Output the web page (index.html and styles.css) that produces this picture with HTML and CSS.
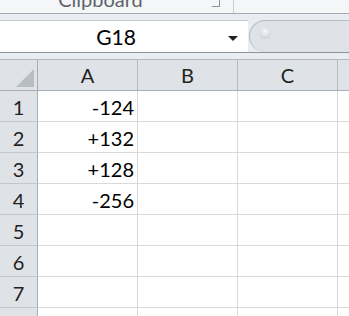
FILE: index.html
```html
<!DOCTYPE html>
<html lang="en">

<head>
    <meta charset="UTF-8">
    <title>Sheet</title>
    <link rel="stylesheet" href="styles.css">
</head>

<body>

    <div class="ribbon">
        <div class="group">
            <span class="group-label">Clipboard</span>
            <span class="launcher"></span>
        </div>
        <div class="group-rest"></div>
    </div>

    <div class="formula-row">
        <div class="name-box">
            <span class="name">G18</span>
            <span class="arrow"></span>
        </div>
        <div class="formula-bar">
            <span class="knob"></span>
        </div>
    </div>

    <div class="sheet">
        <div class="corner"><span class="tri"></span></div>
        <div class="col-head">A</div>
        <div class="col-head">B</div>
        <div class="col-head">C</div>
        <div class="col-head last"></div>

        <div class="row-head">1</div><div class="cell num">-124</div><div class="cell"></div><div class="cell"></div><div class="cell last"></div>
        <div class="row-head">2</div><div class="cell num">+132</div><div class="cell"></div><div class="cell"></div><div class="cell last"></div>
        <div class="row-head">3</div><div class="cell num">+128</div><div class="cell"></div><div class="cell"></div><div class="cell last"></div>
        <div class="row-head">4</div><div class="cell num">-256</div><div class="cell"></div><div class="cell"></div><div class="cell last"></div>
        <div class="row-head">5</div><div class="cell"></div><div class="cell"></div><div class="cell"></div><div class="cell last"></div>
        <div class="row-head">6</div><div class="cell"></div><div class="cell"></div><div class="cell"></div><div class="cell last"></div>
        <div class="row-head">7</div><div class="cell"></div><div class="cell"></div><div class="cell"></div><div class="cell last"></div>
        <div class="row-head">8</div><div class="cell"></div><div class="cell"></div><div class="cell"></div><div class="cell last"></div>
    </div>

</body>

</html>
```

FILE: styles.css
```css
body {
    margin: 0;
    width: 349px;
    height: 316px;
    overflow: hidden;
    font-family: Lato, "Liberation Sans", sans-serif;
    background-color: #e9ecf0;
}

.ribbon {
    display: flex;
    height: 13px;
    overflow: hidden;
    background-color: #f5f6f8;
    border-bottom: 1px solid #a5abb3;
}

.group {
    position: relative;
    width: 233px;
    border-right: 1px solid #c9ced5;
    text-align: center;
}

.group-label {
    display: block;
    margin-top: -12px;
    margin-left: -32px;
    font-size: 20px;
    line-height: 22px;
    color: #5f636a;
}

.launcher {
    position: absolute;
    left: 212px;
    top: 0;
    width: 7px;
    height: 6px;
    border-right: 1px solid #8d939b;
    border-bottom: 1px solid #8d939b;
}

.group-rest {
    flex: 1;
}

.formula-row {
    display: flex;
    height: 32px;
    margin-top: 6px;
    border-bottom: 1px solid #8f959d;
}

.name-box {
    position: relative;
    width: 248px;
    background-color: #fff;
    border-top: 1px solid #c6cbd2;
    text-align: center;
}

.name {
    display: block;
    margin-left: -16px;
    font-size: 21px;
    line-height: 31px;
    color: #000;
}

.arrow {
    position: absolute;
    left: 228px;
    top: 15px;
    border-left: 5px solid transparent;
    border-right: 5px solid transparent;
    border-top: 5px solid #222;
}

.formula-bar {
    flex: 1;
    position: relative;
    background-color: #dfe3e8;
    border: 1px solid #b5bac1;
    border-right: none;
    border-bottom: none;
    border-radius: 16px 0 0 16px;
    margin-left: 1px;
}

.knob {
    position: absolute;
    left: 9px;
    top: 6px;
    width: 12px;
    height: 12px;
    border-radius: 50%;
    background: radial-gradient(circle at 50% 35%, #f6f7f8, #c3c8ce);
}

.sheet {
    display: grid;
    grid-template-columns: 38px 100px 100px 100px 1fr;
    grid-auto-rows: 31px;
    margin-top: 6px;
    border-top: 1px solid #b4b9c0;
    background-color: #fff;
}

.corner {
    position: relative;
    background-color: #dfe3e8;
    border-right: 1px solid #a9aeb5;
    border-bottom: 1px solid #a9aeb5;
}

.tri {
    position: absolute;
    right: 3px;
    bottom: 3px;
    border-left: 18px solid transparent;
    border-bottom: 18px solid #b8bdc3;
}

.col-head {
    background-color: #dfe3e8;
    border-right: 1px solid #b4b9c0;
    border-bottom: 1px solid #a9aeb5;
    text-align: center;
    font-size: 20px;
    line-height: 30px;
    color: #222;
}

.row-head {
    background-color: #dfe3e8;
    border-right: 1px solid #a9aeb5;
    border-bottom: 1px solid #c2c7cd;
    text-align: center;
    font-size: 20px;
    line-height: 32px;
    color: #222;
}

.cell {
    border-right: 1px solid #d9d9d9;
    border-bottom: 1px solid #d9d9d9;
    font-size: 20px;
    line-height: 32px;
    color: #000;
}

.cell.last,
.col-head.last {
    border-right: none;
}

.num {
    text-align: right;
    padding-right: 3px;
}
```
